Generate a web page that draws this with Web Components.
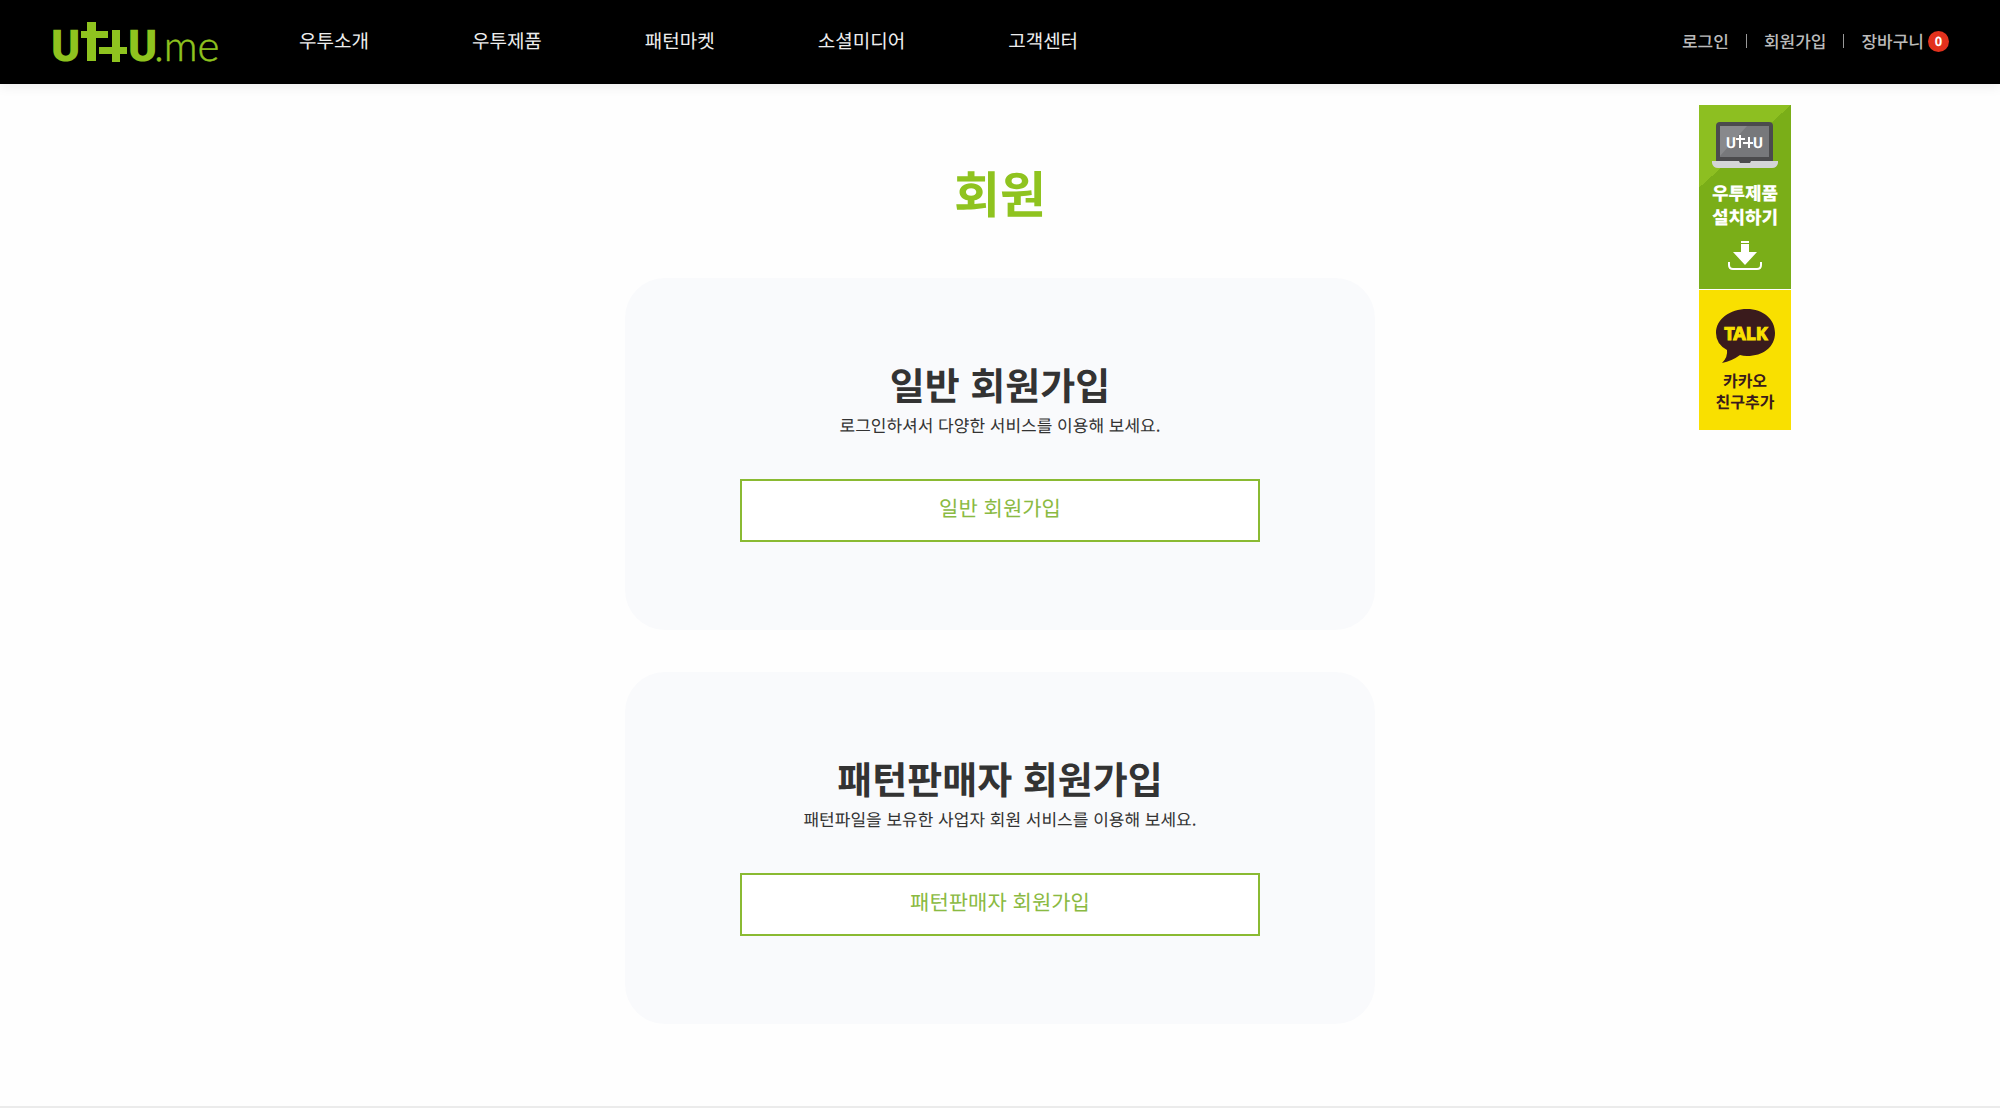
<!DOCTYPE html>
<html lang="ko">
<head>
<meta charset="utf-8">
<title>회원 - uttu.me</title>
<style>
  body {
    margin: 0;
    background: #fefefe;
    color: #333;
    font-family: "Noto Sans CJK KR", "Noto Sans", sans-serif;
    text-rendering: geometricPrecision;
  }
</style>
</head>
<body>
<uttu-page>
  <uttu-header slot="header"></uttu-header>
  <uttu-banners slot="banners"></uttu-banners>
  <span slot="title">회원</span>
  <join-card>
    <span slot="title">일반 회원가입</span>
    <span slot="text">로그인하셔서 다양한 서비스를 이용해 보세요.</span>
    <span slot="action">일반 회원가입</span>
  </join-card>
  <join-card>
    <span slot="title">패턴판매자 회원가입</span>
    <span slot="text">패턴파일을 보유한 사업자 회원 서비스를 이용해 보세요.</span>
    <span slot="action">패턴판매자 회원가입</span>
  </join-card>
</uttu-page>

<template id="page">
  <style>
    :host {
      display: block;
      position: relative;
    }
    main {
      display: flex;
      flex-direction: column;
      align-items: center;
      padding: 72px 20px 82px;
      border-bottom: 2px solid #ebebeb;
    }
    h1 {
      margin: 0 0 50px;
      color: #8fc31f;
      font-size: 50px;
      font-weight: 700;
      line-height: 72px;
    }
    .cards {
      display: grid;
      gap: 42px;
      width: 100%;
      max-width: 750px;
    }
    .banners {
      position: absolute;
      top: 105px;
      right: 209px;
    }
  </style>
  <slot name="header"></slot>
  <main>
    <h1><slot name="title"></slot></h1>
    <div class="cards"><slot></slot></div>
  </main>
  <aside class="banners"><slot name="banners"></slot></aside>
</template>

<template id="header">
  <style>
    :host {
      display: block;
    }
    header {
      display: flex;
      align-items: center;
      min-height: 84px;
      padding: 0 51px 0 52px;
      background: #000;
      box-shadow: 0 2px 12px rgba(0, 0, 0, 0.08);
    }
    a {
      color: inherit;
      text-decoration: none;
    }
    .logo,
    .logo svg {
      display: block;
    }
    nav {
      display: flex;
      gap: 103px;
      margin-left: 79px;
      padding-bottom: 2px;
      color: #eee;
      font-size: 19px;
      line-height: 28px;
      white-space: nowrap;
    }
    .user {
      display: flex;
      align-items: center;
      margin-left: auto;
      padding-bottom: 2px;
      color: #bbb;
      font-size: 17px;
      font-weight: 500;
      line-height: 24px;
      white-space: nowrap;
    }
    .user i {
      width: 1px;
      height: 14px;
      margin: 0 17px;
      background: #999;
    }
    .cart {
      display: flex;
      align-items: center;
      gap: 4px;
    }
    .badge {
      width: 21px;
      border-radius: 50%;
      background: #e2311d;
      color: #fff;
      font: 700 13px/21px "Noto Sans", sans-serif;
      text-align: center;
    }
  </style>
  <header>
    <a class="logo" href="#" aria-label="uttu.me">
      <svg width="168" height="84" viewBox="0 0 168 84" fill="#8fc31f">
        <text x="-1" y="61" font-family="Roboto" font-weight="900" font-size="44">U</text>
        <path d="M35 22h9v9h12v7H44v23h-9V38h-6v-7h6z"/>
        <path d="M60 30h8v17h7v7h-7v8h-8v-8H47v-7h13z"/>
        <text x="76" y="61" font-family="Roboto" font-weight="900" font-size="44">U</text>
        <text x="102" y="61" font-family="Lato" font-weight="300" font-size="42" stroke="#8fc31f" stroke-width="0.5">.me</text>
      </svg>
    </a>
    <nav>
      <a href="#">우투소개</a>
      <a href="#">우투제품</a>
      <a href="#">패턴마켓</a>
      <a href="#">소셜미디어</a>
      <a href="#">고객센터</a>
    </nav>
    <div class="user">
      <a href="#">로그인</a><i></i>
      <a href="#">회원가입</a><i></i>
      <a class="cart" href="#">장바구니<span class="badge">0</span></a>
    </div>
  </header>
</template>

<template id="banners">
  <style>
    :host {
      display: grid;
      gap: 1px;
      width: 92px;
    }
    a {
      display: flex;
      flex-direction: column;
      align-items: center;
      text-align: center;
      text-decoration: none;
      white-space: nowrap;
    }
    svg {
      display: block;
    }
    .install {
      gap: 9px;
      padding: 17px 0 19px;
      background: linear-gradient(138deg, #8dbf21 0 31%, #7aae18 31%);
      color: #fff;
      font-size: 18px;
      font-weight: 900;
      line-height: 24px;
    }
    .install span {
      padding-bottom: 2px;
    }
    .talk {
      gap: 6px;
      padding: 19px 0 18px;
      background: #f9e000;
      color: #3a1b1c;
      font-size: 16px;
      font-weight: 700;
      line-height: 21px;
    }
  </style>
  <a class="install" href="#">
    <svg width="68" height="50" viewBox="0 0 68 50" aria-hidden="true">
      <path d="M5 40V4q0-4 4-4h49q4 0 4 4v36z" fill="#4b4b4d"/>
      <path d="M9 4h49v31H9z" fill="#77787b"/>
      <path d="M9 4h27L9 34z" fill="#88898c"/>
      <path d="M1 39h66v2q-1 5-6 5H7q-5 0-6-5z" fill="#d4d5d6"/>
      <path d="M28 39h12l-1 2H29z" fill="#4b4b4d"/>
      <g fill="#fff">
        <text x="15" y="26" font-family="Roboto" font-weight="700" font-size="15">U</text>
        <path d="M28 13h2v3h4v2h-4v8h-2v-8h-3v-2h3z"/>
        <path d="M37 15h2v5h3v2h-3v4h-2v-4h-5v-2h5z"/>
        <text x="42" y="26" font-family="Roboto" font-weight="700" font-size="15">U</text>
      </g>
    </svg>
    <span>우투제품<br>설치하기</span>
    <svg width="34" height="30" viewBox="0 0 34 30" aria-hidden="true">
      <path d="M13 1h8v2h-8zM13 4h8v8h8L17 25 5 12h8z" fill="#fff"/>
      <path d="M1 22v3q0 4 4 4h24q4 0 4-4v-3" fill="none" stroke="#fff" stroke-width="2"/>
    </svg>
  </a>
  <a class="talk" href="#">
    <svg width="62" height="55" viewBox="0 0 62 55" aria-hidden="true">
      <path d="M33 0C49 0 61 10 61 24S49 47 33 47q-4 0-7-1-8 6-18 8 6-6 5-13Q2 35 2 24C2 10 16 0 33 0z" fill="#3a1b1c"/>
      <text x="32" y="31" text-anchor="middle" fill="#f9e000" stroke="#f9e000" font-family="Noto Sans" font-weight="700" font-size="18">TALK</text>
    </svg>
    <span>카카오<br>친구추가</span>
  </a>
</template>

<template id="card">
  <style>
    :host {
      display: block;
      padding: 82px 115px 88px;
      border-radius: 40px;
      background: #f9fafc;
      text-align: center;
    }
    h2 {
      margin: 0 0 5px;
      font-size: 38px;
      font-weight: 700;
      line-height: 48px;
    }
    p {
      margin: 0 0 42px;
      font-size: 17px;
      line-height: 24px;
    }
    button {
      display: block;
      width: 100%;
      padding: 13px 20px 18px;
      border: 2px solid #8aba32;
      background: #fff;
      color: #8aba42;
      font: inherit;
      font-size: 21px;
      line-height: 28px;
      text-rendering: inherit;
      cursor: pointer;
    }
  </style>
  <h2><slot name="title"></slot></h2>
  <p><slot name="text"></slot></p>
  <button type="button"><slot name="action"></slot></button>
</template>

<script>
  (() => {
    class TemplateElement extends HTMLElement {
      constructor() {
        super();
        const template = document.getElementById(this.constructor.templateId);
        this.attachShadow({mode: 'open'}).appendChild(template.content.cloneNode(true));
      }
    }

    class UttuPage extends TemplateElement {
      static get templateId() { return 'page'; }
    }

    class UttuHeader extends TemplateElement {
      static get templateId() { return 'header'; }
    }

    class UttuBanners extends TemplateElement {
      static get templateId() { return 'banners'; }
    }

    class JoinCard extends TemplateElement {
      static get templateId() { return 'card'; }
    }

    customElements.define('uttu-page', UttuPage);
    customElements.define('uttu-header', UttuHeader);
    customElements.define('uttu-banners', UttuBanners);
    customElements.define('join-card', JoinCard);
  })();
</script>
</body>
</html>
